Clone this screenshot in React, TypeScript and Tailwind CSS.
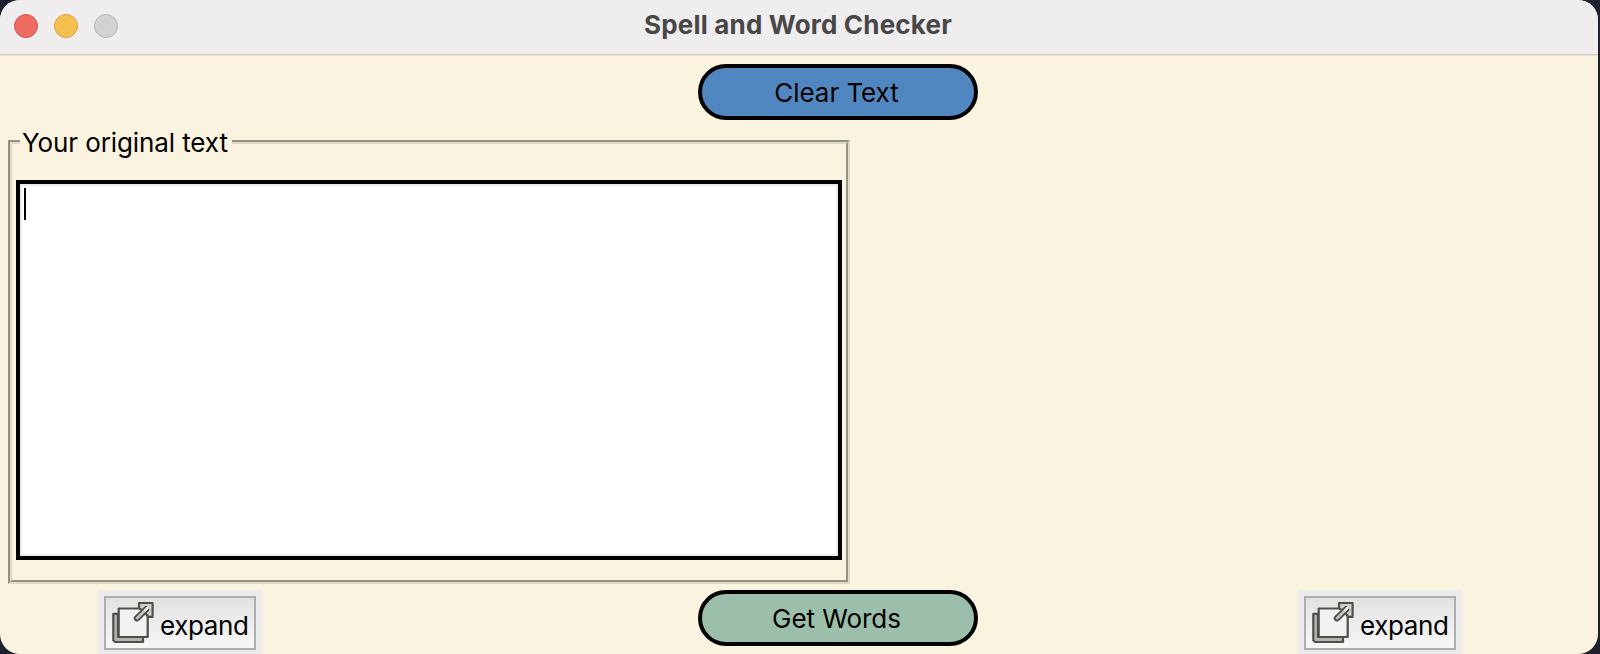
function ExpandIcon() {
  return (
    <svg width="44" height="46" viewBox="0 0 44 46" fill="none" strokeLinejoin="round" strokeLinecap="round">
      <path d="M3.3 13.8H8v23.2h25v5H5.2L3.3 40.5Z" fill="#b4b4b0" stroke="#50504a" strokeWidth="2.2" />
      <rect x="8.7" y="8.5" width="29" height="28.5" fill="#f2f2f2" stroke="#50504a" strokeWidth="2.2" />
      <path d="M29 3H42.6V16.8H38.5L35.5 13.5L29 8Z" fill="#d0d0cb" stroke="#50504a" strokeWidth="2.2" />
      <path d="M27 18.2L36 9.5" stroke="#50504a" strokeWidth="6.4" />
      <path d="M27 18.2L37 8.5" stroke="#c4c4bf" strokeWidth="2.6" />
      <path d="M35 10.5L38 7.5" stroke="#efefef" strokeWidth="2.4" />
    </svg>
  );
}

function ExpandButton() {
  return (
    <div className="h-[70px] w-[164px] shrink-0 bg-[#ebebeb] p-1.5">
      <button className="flex h-[54px] w-[152px] items-center border-2 border-[#adadad] bg-linear-to-b from-[#e2e2e2] to-[#f7f7f7] pl-1">
        <ExpandIcon />
        <span className="ml-[6px] pt-[5px] text-[26px] leading-8 tracking-[-0.4px]">expand</span>
      </button>
    </div>
  );
}

function PillButton({ label, color }: { label: string; color: string }) {
  return (
    <button
      className={`flex h-14 w-[280px] shrink-0 items-center justify-center rounded-[28px] border-4 border-black pt-0.5 pr-[3px] text-[26px] leading-8 tracking-[-0.05px] ${color}`}
    >
      {label}
    </button>
  );
}

function TitleBar() {
  return (
    <header className="grid h-[54px] shrink-0 grid-cols-[1fr_auto_1fr] items-center bg-[#efedee] pb-1">
      <div className="flex gap-4 pt-0.5 pl-[14px]">
        <i className="size-6 rounded-full border border-[#d9534b] bg-[#ed6b60]" />
        <i className="size-6 rounded-full border border-[#d9a140] bg-[#f5c04f]" />
        <i className="size-6 rounded-full border border-[#b5b3b5] bg-[#d3d1d3]" />
      </div>
      <h1 className="pr-[2px] text-[26px] leading-8 font-bold tracking-[0.18px] text-[#484748]">
        Spell and Word Checker
      </h1>
    </header>
  );
}

export default function App() {
  return (
    <div className="h-[654px] w-[1600px] overflow-hidden bg-[#1d202d] font-['Inter','Liberation_Sans',sans-serif] text-black">
      <div className="flex h-[654px] w-[1598px] flex-col overflow-hidden rounded-[20px] bg-[#faf3e0]">
        <TitleBar />
        <div className="h-0.5 shrink-0 border-t border-[#cfc9b5] bg-[#ece5d0]" />
        <main className="flex flex-col">
          <div className="flex h-[76px] pt-2 pl-[698px]">
            <PillButton label="Clear Text" color="bg-[#5187c0]" />
          </div>
          <section className="ml-2 h-[452px] w-[842px]">
            <div className="mt-2 h-[444px] border-2 border-t-[#949282] border-r-[#dfd9c8] border-b-[#dfd9c8] border-l-[#949282]">
              <div className="h-[440px] border-2 border-t-[#dfd9c8] border-r-[#949282] border-b-[#949282] border-l-[#dfd9c8]">
                <h2 className="relative -top-[19px] ml-2 h-9 w-[212px] bg-[#faf3e0] pl-[2px] text-[26px] leading-9 tracking-[-0.1px] whitespace-nowrap">
                  Your original text
                </h2>
                <div className="ml-1 h-[380px] w-[826px] border-4 border-black bg-white">
                  <div className="h-[372px] border-2 border-[#ebebeb] pt-0.5 pl-0.5">
                    <div className="h-8 w-0.5 bg-black" />
                  </div>
                </div>
              </div>
            </div>
          </section>
          <div className="flex pt-1.5">
            <div className="w-[98px] shrink-0" />
            <ExpandButton />
            <div className="w-[436px] shrink-0" />
            <PillButton label="Get Words" color="bg-[#9bbfaa]" />
            <div className="w-[320px] shrink-0" />
            <ExpandButton />
          </div>
        </main>
      </div>
    </div>
  );
}
